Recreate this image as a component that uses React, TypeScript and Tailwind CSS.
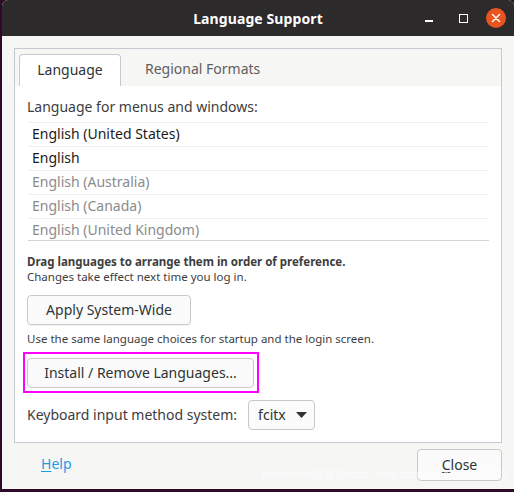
import React from 'react';

const font = { fontFamily: '"Noto Sans", "Open Sans", sans-serif' };

const languages = [
  { name: 'English (United States)', active: true },
  { name: 'English', active: true },
  { name: 'English (Australia)', active: false },
  { name: 'English (Canada)', active: false },
  { name: 'English (United Kingdom)', active: false },
];

const App: React.FC = () => {
  return (
    <div className="w-[514px] h-[492px] bg-[#2d0b28] overflow-hidden" style={font}>
      <div className="relative ml-[2px] h-[489px] flex flex-col bg-[#f6f6f5] rounded-tl-[6px] rounded-tr-[6px] overflow-hidden">
        {/* title bar */}
        <div className="relative h-[36px] shrink-0 bg-[#2c2a2b] flex items-center justify-center">
          <span className="text-white text-[14px] font-bold tracking-[0.1px]">Language Support</span>
          <div className="absolute right-[8px] top-0 h-[36px] flex items-center">
            <div className="w-[34px] h-[36px] flex items-center justify-center">
              <div className="w-[8px] h-[1.5px] bg-white mt-[6px]" />
            </div>
            <div className="w-[34px] h-[36px] flex items-center justify-center">
              <div className="w-[9px] h-[9px] border-[1.5px] border-white" />
            </div>
            <div className="w-[20px] h-[20px] rounded-full bg-[#e95420] flex items-center justify-center ml-[6px]">
              <svg width="10" height="10" viewBox="0 0 10 10">
                <path d="M1.5 1.5 L8.5 8.5 M8.5 1.5 L1.5 8.5" stroke="white" strokeWidth="1.5" strokeLinecap="round" />
              </svg>
            </div>
          </div>
        </div>

        {/* body */}
        <div className="flex-1 flex flex-col px-[12px] pt-[12px]">
          <div className="h-[395px] border border-[#c6cad0] flex flex-col">
            {/* tabs */}
            <div className="flex items-end pl-[4px] pt-[4px] h-[37px] shrink-0">
              <div className="w-[102px] h-[32px] pb-[3px] bg-white border border-b-0 border-[#c6cad0] rounded-t-[4px] flex items-center justify-center text-[14px] text-[#2e3436]">
                Language
              </div>
              <div className="h-[32px] pb-[3px] flex-1 flex items-center pl-[24px] text-[14px] text-[#5e5e5e]">
                Regional Formats
              </div>
            </div>
            {/* page */}
            <div className="flex-1 bg-white px-[12px] pt-[11px] flex flex-col">
              <div className="text-[14px] text-[#3d3d3d] leading-[20px]">Language for menus and windows:</div>
              <div className="mt-[5px] ml-[1px] w-[461px] border-t border-[#eeeeee] border-b border-b-[#d4d4d4]">
                {languages.map((l, i) => (
                  <div
                    key={l.name}
                    className={`flex items-center pl-[4px] text-[14px] ${i < languages.length - 1 ? 'h-[24px] pb-[3px] border-b border-[#eeeeee]' : 'h-[21px] pb-[1px]'} ${l.active ? 'text-[#1b1b1b]' : 'text-[#8b8b8b]'}`}
                  >
                    {l.name}
                  </div>
                ))}
              </div>
              <div className="mt-[13px] text-[11.5px] font-bold text-[#3d3d3d] leading-[16px]">
                Drag languages to arrange them in order of preference.
              </div>
              <div className="text-[11.5px] text-[#3d3d3d] leading-[14px]">Changes take effect next time you log in.</div>
              <button className="mt-[11px] w-[164px] h-[30px] pb-[1px] rounded-[4px] border border-[#cdc7c2] bg-[#fbfbfb] text-[14px] text-[#2e3436] shadow-[0_1px_0_rgba(0,0,0,0.04)]">
                Apply System-Wide
              </button>
              <div className="mt-[6px] text-[11.5px] text-[#3d3d3d] leading-[16px]">
                Use the same language choices for startup and the login screen.
              </div>
              <div className="mt-[5px] -ml-[4px] w-[236px] h-[41px] border-2 border-[#ff00ff] pl-[2px] pt-[4px]">
                <button className="w-[227px] h-[30px] pb-[1px] rounded-[4px] border border-[#cdc7c2] bg-[#fbfbfb] text-[14px] text-[#2e3436]">
                  Install / Remove Languages...
                </button>
              </div>
              <div className="mt-[7px] flex items-center">
                <span className="text-[14px] text-[#3d3d3d] pb-[1px]">Keyboard input method system:</span>
                <div className="ml-[11px] w-[67px] h-[30px] pb-[1px] rounded-[4px] border border-[#cdc7c2] bg-[#fbfbfb] flex items-center pl-[9px] text-[14px] text-[#2e3436]">
                  fcitx
                  <svg className="ml-[10px]" width="11" height="6" viewBox="0 0 11 6">
                    <path d="M0 0 H11 L5.5 6 Z" fill="#2e3436" />
                  </svg>
                </div>
              </div>
            </div>
          </div>

          {/* footer */}
          <div className="flex items-start justify-between mt-[6px]">
            <span className="ml-[27px] mt-[4px] text-[14px] text-[#1d9be3]">
              <span className="underline underline-offset-2">H</span>elp
            </span>
            <button className="w-[85px] h-[32px] pb-[1px] rounded-[4px] border border-[#cdc7c2] bg-[#fbfbfb] text-[14px] text-[#2e3436]">
              <span className="underline underline-offset-2">C</span>lose
            </button>
          </div>
        </div>

        {/* watermark overlay */}
        <div className="absolute left-[260px] top-[467px] text-[10.5px] text-white/70 whitespace-nowrap" style={{ fontFamily: '"Liberation Sans", sans-serif' }}>
          Moresweat猫甜@https://blog.csdn.net/qq_38853759
        </div>
      </div>
    </div>
  );
};

export default App;
